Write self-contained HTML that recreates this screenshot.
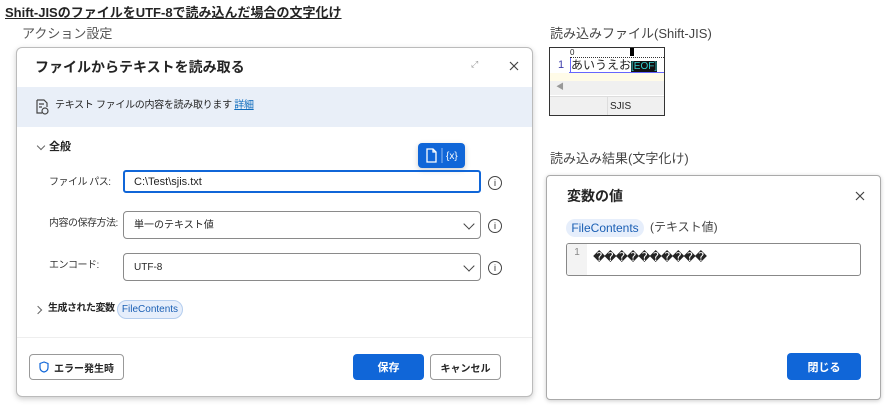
<!DOCTYPE html>
<html><head><meta charset="utf-8"><style>
*{box-sizing:border-box;margin:0;padding:0}
body{width:886px;height:406px;background:#fff;position:relative;overflow:hidden;font-family:"Liberation Sans","Noto Sans CJK JP",sans-serif;color:#242424}
.a{position:absolute}
.t{font-size:12px;white-space:nowrap;line-height:1.2}
.box{border:1px solid #8a8a8a;border-radius:4px;background:#fff}
.info{width:14px;height:14px;border:1.2px solid #444;border-radius:50%;font-size:9px;text-align:center;line-height:12px}
.chev{width:6px;height:6px;border-right:1.2px solid #666;border-bottom:1.2px solid #666;transform:rotate(45deg)}
.bigchev{width:8px;height:8px;border-right:1.2px solid #444;border-bottom:1.2px solid #444;transform:rotate(45deg)}
.btn{border-radius:4px;font-size:11px;font-weight:bold;display:flex;align-items:center;justify-content:center;white-space:nowrap}
.chip{display:flex;align-items:center;justify-content:center;white-space:nowrap}
.lbl{font-size:10px;letter-spacing:-0.5px;color:#333}
</style></head><body>
<div class="a t" style="left:5px;top:5px;font-size:13px;font-weight:bold;text-decoration:underline">Shift-JISのファイルをUTF-8で読み込んだ場合の文字化け</div>
<div class="a t" style="left:22px;top:26px;font-size:13px;color:#555">アクション設定</div>

<div class="a" style="left:16px;top:47px;width:517px;height:350px;border:1px solid #bbb;border-radius:6px;box-shadow:0 2px 6px rgba(0,0,0,.2);background:#fff"></div>
<div class="a t" style="left:35px;top:59px;font-size:14px;font-weight:bold">ファイルからテキストを読み取る</div>
<div class="a t" style="left:471px;top:59px;color:#999;font-size:9px">⤢</div>
<svg class="a" style="left:509px;top:61px" width="10" height="10"><path d="M1 1l8 8M9 1l-8 8" stroke="#444" stroke-width="1.2"/></svg>
<div class="a" style="left:17px;top:87px;width:515px;height:40px;background:#e9eff8"></div>
<svg class="a" style="left:35px;top:99px" width="14" height="16" viewBox="0 0 14 16"><path d="M2 1h7l3 3v4M2 1v13h5M4 5h5M4 8h3" fill="none" stroke="#444" stroke-width="1.2"/><circle cx="10" cy="12" r="3" fill="none" stroke="#444" stroke-width="1.2"/></svg>
<div class="a t" style="left:55px;top:100px;font-size:10px;letter-spacing:-0.3px">テキスト ファイルの内容を読み取ります <span style="color:#0f6cbd;text-decoration:underline">詳細</span></div>

<div class="a chev" style="left:38px;top:143px"></div>
<div class="a t" style="left:49px;top:141px;font-weight:bold;font-size:11px">全般</div>
<div class="a" style="left:418px;top:143px;width:47px;height:25px;background:#1066d8;border-radius:4px;box-shadow:0 2px 6px rgba(0,0,0,.2)"></div>
<svg class="a" style="left:425px;top:147px" width="36" height="17" viewBox="0 0 36 17"><path d="M2 2h6l3 3v10H2zM8 2v3h3" fill="none" stroke="#fff" stroke-width="1.3"/><path d="M17 1v15" stroke="#8fb8f0"/><text x="21" y="12" fill="#fff" font-size="10" font-family="Liberation Sans">{x}</text></svg>

<div class="a t lbl" style="left:49px;top:177px">ファイル パス:</div>
<div class="a" style="left:123px;top:170px;width:358px;height:23px;border:2px solid #1066d8;border-radius:3px"></div>
<div class="a t" style="left:134px;top:176px;font-size:11px">C:\Test\sjis.txt</div>
<div class="a info" style="left:488px;top:176px">i</div>

<div class="a t lbl" style="left:49px;top:218px">内容の保存方法:</div>
<div class="a box" style="left:123px;top:211px;width:358px;height:28px"></div>
<div class="a t" style="left:134px;top:220px;font-size:10px">単一のテキスト値</div>
<div class="a bigchev" style="left:465px;top:220px"></div>
<div class="a info" style="left:488px;top:219px">i</div>

<div class="a t lbl" style="left:49px;top:260px">エンコード:</div>
<div class="a box" style="left:123px;top:253px;width:358px;height:28px"></div>
<div class="a t" style="left:134px;top:262px;font-size:10px">UTF-8</div>
<div class="a bigchev" style="left:465px;top:262px"></div>
<div class="a info" style="left:488px;top:261px">i</div>

<div class="a chev" style="left:35px;top:307px;transform:rotate(-45deg)"></div>
<div class="a t" style="left:48px;top:303px;font-size:10px;font-weight:bold;letter-spacing:-0.5px">生成された変数</div>
<div class="a chip" style="left:117px;top:300px;width:66px;height:19px;border:1px solid #b4cdee;background:#e6eefb;border-radius:10px;color:#1a5fb4;font-size:10px">FileContents</div>
<div class="a" style="left:17px;top:337px;width:515px;border-top:1px solid #eee"></div>

<div class="a btn" style="left:29px;top:354px;width:95px;height:26px;border:1px solid #999;background:#fff;font-size:10px">
<svg style="margin-right:5px" width="10" height="12" viewBox="0 0 10 12"><path d="M5 1L1 2.5v4C1 9 3 10.5 5 11c2-.5 4-2 4-4.5v-4z" fill="none" stroke="#1066d8" stroke-width="1.2"/></svg>エラー発生時</div>
<div class="a btn" style="left:353px;top:354px;width:71px;height:26px;background:#1066d8;color:#fff">保存</div>
<div class="a btn" style="left:430px;top:354px;width:71px;height:26px;border:1px solid #999;background:#fff;font-size:10px">キャンセル</div>

<div class="a t" style="left:550px;top:26px;font-size:13px;color:#444">読み込みファイル(Shift-JIS)</div>
<div class="a" style="left:549px;top:47px;width:116px;height:69px;border:1px solid #333;background:#fff;overflow:hidden">
<div class="a" style="left:20px;top:0;width:96px;height:10px;border-bottom:1px dotted #333;font-size:8px;line-height:9px">0</div>
<div class="a" style="left:80px;top:0;width:4px;height:8px;background:#000"></div>
<div class="a t" style="left:8px;top:11px;font-size:11px;color:#3c3caa">1</div>
<div class="a t" style="left:20px;top:10px;font-size:12px;border-left:1px solid #66f">あいうえお<span style="background:#111;color:#3cc;font-size:10px">[EOF]</span></div>
<div class="a" style="left:19px;top:24px;width:96px;border-top:1px solid #66f"></div>
<div class="a" style="left:0;top:25px;width:116px;height:8px;background:#fffbe8"></div>
<div class="a" style="left:0;top:33px;width:116px;height:14px;background:#f0f0f0;font-size:8px;color:#999;padding-left:6px">◀</div>
<div class="a" style="left:0;top:48px;width:116px;height:21px;background:#f0f0f0;border-top:1px solid #ddd"></div>
<div class="a" style="left:57px;top:48px;height:21px;border-left:1px solid #ddd"></div>
<div class="a t" style="left:60px;top:53px;font-size:10px">SJIS</div>
</div>

<div class="a t" style="left:550px;top:151px;font-size:13px;color:#444">読み込み結果(文字化け)</div>
<div class="a" style="left:546px;top:175px;width:335px;height:225px;border:1px solid #aaa;border-radius:4px;box-shadow:0 1px 4px rgba(0,0,0,.2);background:#fff"></div>
<div class="a t" style="left:567px;top:188px;font-size:14px;font-weight:bold">変数の値</div>
<svg class="a" style="left:855px;top:191px" width="10" height="10"><path d="M1 1l8 8M9 1l-8 8" stroke="#444" stroke-width="1.2"/></svg>
<div class="a chip" style="left:566px;top:219px;width:78px;height:18px;background:#e6eefb;border-radius:9px;color:#1a5fb4;font-size:12px">FileContents</div>
<div class="a t" style="left:650px;top:220px;font-size:12px;color:#444">(テキスト値)</div>
<div class="a" style="left:566px;top:243px;width:295px;height:33px;border:1px solid #888;border-radius:3px;overflow:hidden">
<div class="a" style="left:0;top:0;width:20px;height:33px;background:#f3f3f3;font-size:10px;color:#888;text-align:center;padding-top:3px">1</div>
<div class="a t" style="left:26px;top:6px;font-size:12px;letter-spacing:-1px">&#xFFFD;&#xFFFD;&#xFFFD;&#xFFFD;&#xFFFD;&#xFFFD;&#xFFFD;&#xFFFD;&#xFFFD;&#xFFFD;</div>
</div>
<div class="a btn" style="left:787px;top:353px;width:74px;height:27px;background:#1066d8;color:#fff">閉じる</div>
</body></html>
